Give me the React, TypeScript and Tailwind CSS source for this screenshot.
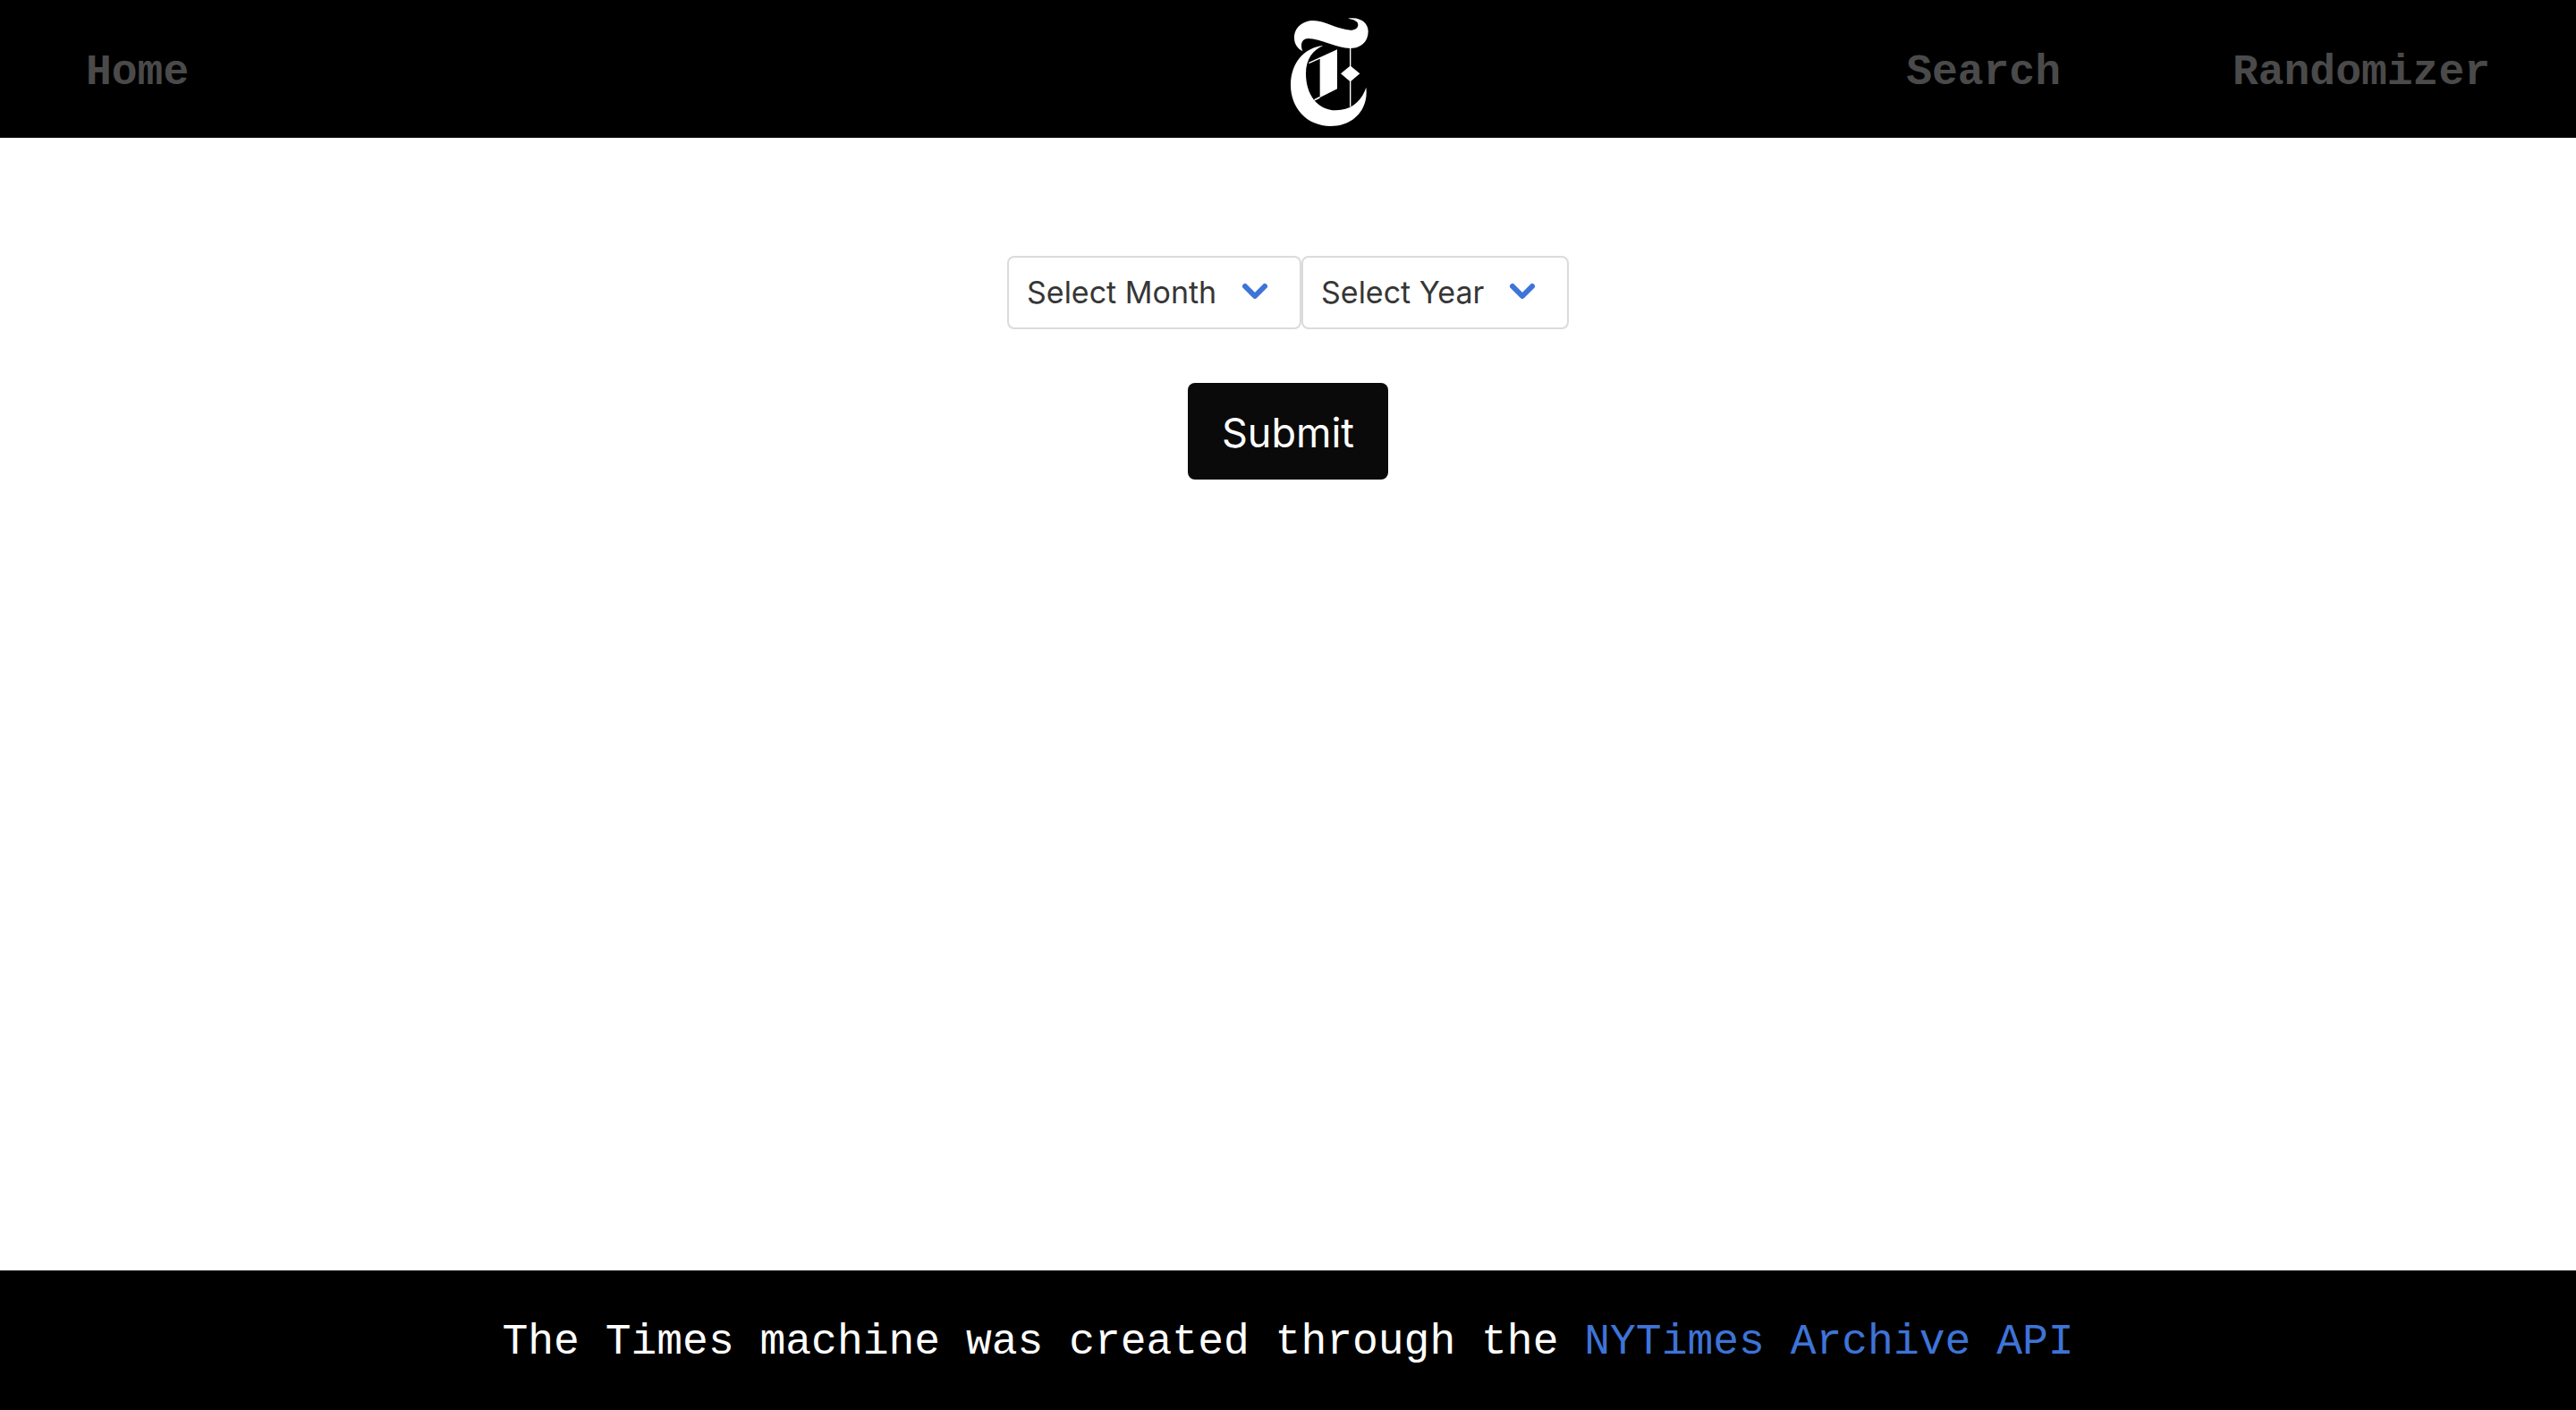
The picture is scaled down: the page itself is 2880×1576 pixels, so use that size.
import type { ReactNode } from "react";

const MONTHS = [
  "January", "February", "March", "April", "May", "June",
  "July", "August", "September", "October", "November", "December",
];
const YEARS = Array.from({ length: 170 }, (_, i) => String(2020 - i));

function TimesLogo() {
  return (
    <svg viewBox="60 36 282 390" className="h-[130px] w-[94px]" fill="#fff" aria-hidden="true">
      <path d="M109 172C92 163 81 148 81 127C81 93 108 69 146 69C181 69 231 100 270 101C284 101 295 94 295 83C295 71 281 65 261 62C299 55 329 74 329 106C329 140 304 162 269 162C224 162 168 129 128 129C109 129 99 145 109 172Z" />
      <path d="M178 153C145 166 120 198 120 246C120 318 159 370 221 370C270 370 307 341 322 293C331 365 281 423 203 423C123 423 69 362 69 286C69 211 113 160 178 153Z" />
      <path d="M225 166V298L167 327V197L130 214V209Z" />
      <path d="M167 323V329L148 338V333Z" />
      <path d="M267 160H271V222L301 247L271 272V358H267V272L237 247L267 222Z" />
    </svg>
  );
}

function NavLink({ href, children }: { href: string; children: ReactNode }) {
  return (
    <a href={href} className="px-24 pt-2 font-bold text-[#4a4a4a]">
      {children}
    </a>
  );
}

function Picker({ label, options }: { label: string; options: string[] }) {
  return (
    <div className="relative">
      <select
        aria-label={label}
        defaultValue=""
        className="block appearance-none rounded-lg border-2 border-[#dbdbdb] bg-white py-[17px] pr-[92px] pl-5 text-[34px] leading-[44px] text-[#363636]"
      >
        <option value="">{label}</option>
        {options.map((option) => (
          <option key={option} value={option}>
            {option}
          </option>
        ))}
      </select>
      <svg
        viewBox="0 0 28 20"
        className="pointer-events-none absolute top-[30px] right-[38px] h-5 w-7"
        fill="none"
        stroke="#3e74d8"
        strokeWidth="6"
        strokeLinecap="round"
        strokeLinejoin="round"
        aria-hidden="true"
      >
        <path d="M3 4L14 15L25 4" />
      </svg>
    </div>
  );
}

export default function App() {
  return (
    <div className="flex min-h-screen flex-col bg-white font-['Inter',sans-serif]">
      <header className="grid grid-cols-2 items-center bg-black py-3 font-['Liberation_Mono',monospace] text-5xl">
        <nav className="flex" aria-label="Home">
          <NavLink href="#home">Home</NavLink>
        </nav>
        <div className="flex items-center justify-between">
          <TimesLogo />
          <nav className="flex" aria-label="Main">
            <NavLink href="#search">Search</NavLink>
            <NavLink href="#randomizer">Randomizer</NavLink>
          </nav>
        </div>
      </header>

      <main className="flex-1 pt-[132px]">
        <form className="flex flex-col items-center gap-[60px]" onSubmit={(e) => e.preventDefault()}>
          <div className="flex">
            <Picker label="Select Month" options={MONTHS} />
            <Picker label="Select Year" options={YEARS} />
          </div>
          <button type="submit" className="rounded-lg bg-[#0a0a0a] px-[38px] pt-5 pb-4 text-[45px] leading-[72px] text-white">
            Submit
          </button>
        </form>
      </main>

      <footer className="bg-black pt-11 pb-10 text-center font-['Liberation_Mono',monospace] text-5xl leading-[72px] text-white">
        <p>
          The Times machine was created through the{" "}
          <a href="#archive-api" className="text-[#3e74d8]">
            NYTimes Archive API
          </a>
        </p>
      </footer>
    </div>
  );
}
